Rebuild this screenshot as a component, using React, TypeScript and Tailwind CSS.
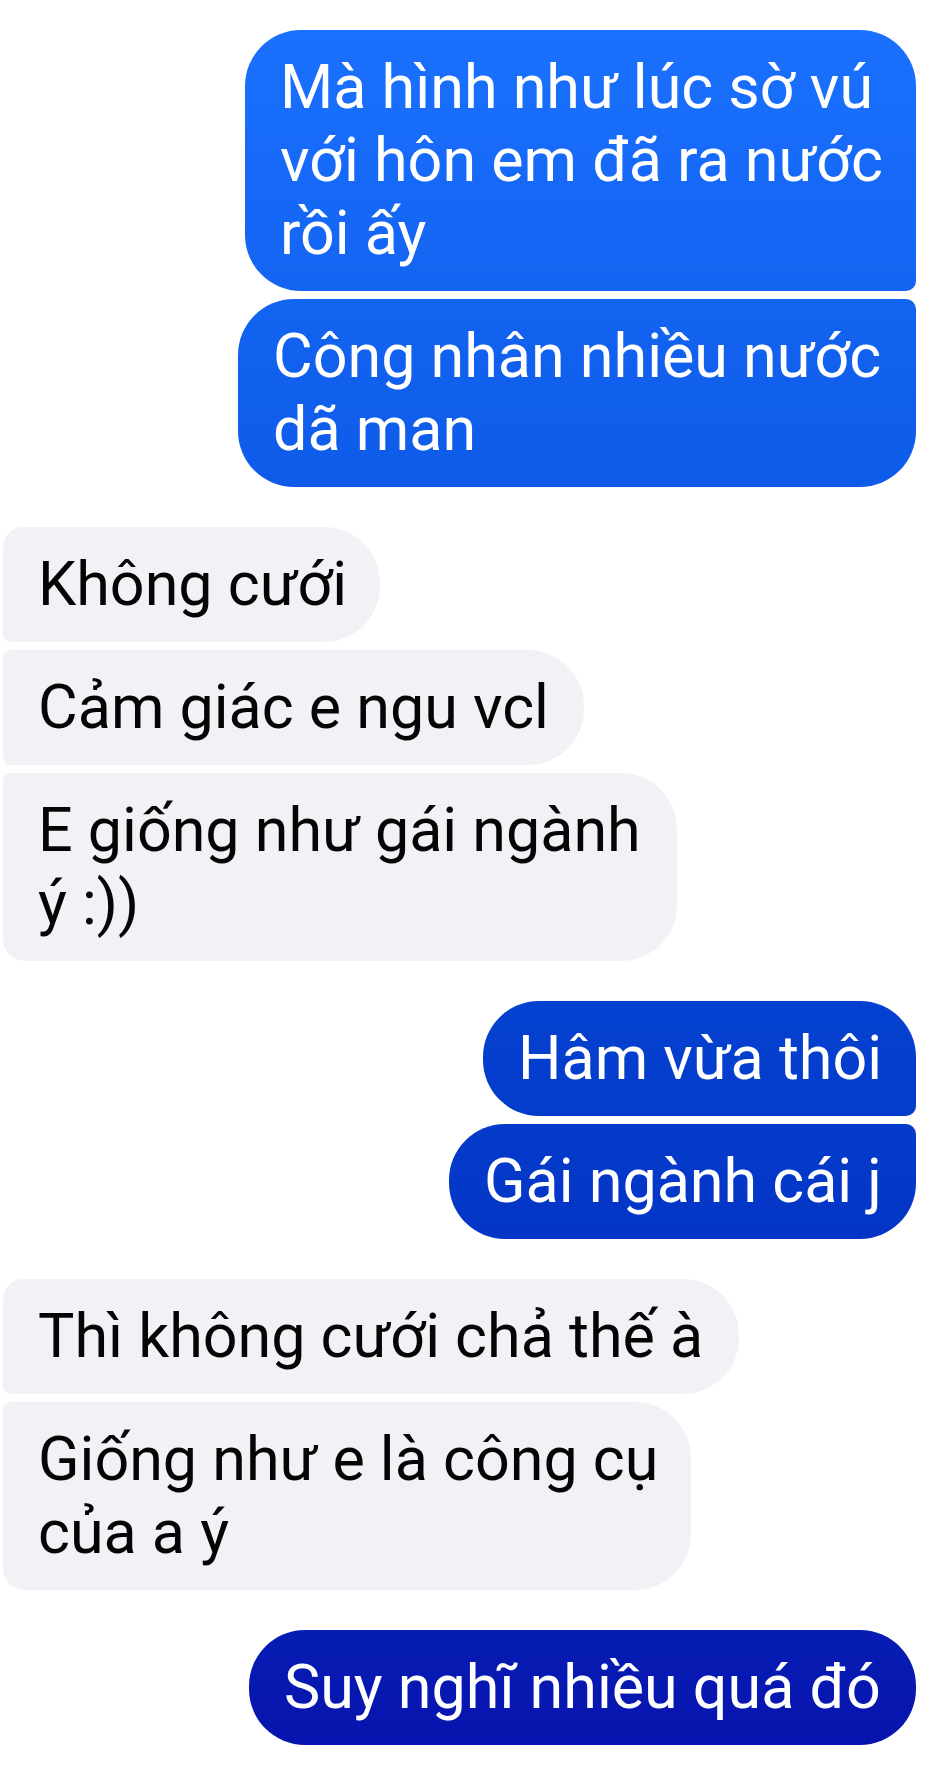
type Side = 'me' | 'them';

interface BubbleProps {
  lines: string[];
  side: Side;
  width: string;
  shape: string;
}

function Bubble({ lines, side, width, shape }: BubbleProps) {
  const tone =
    side === 'me'
      ? 'bg-fixed bg-linear-to-b from-[#1b72ff] to-[#0811ad] text-white'
      : 'bg-[#f1f2f6] text-[#050505]';
  return (
    <div className={`${tone} ${width} ${shape} px-[35px] py-[21px] whitespace-nowrap`}>
      {lines.map((l, i) => (
        <div key={i}>{l}</div>
      ))}
    </div>
  );
}

export default function App() {
  return (
    <div className="min-h-screen bg-white font-['Roboto',sans-serif] text-[61px] leading-[73px] pt-[30px] pb-[23px] flex flex-col gap-10">
      <div className="flex flex-col items-end gap-2 pr-5">
        <Bubble
          side="me"
          width="w-[671px]"
          shape="rounded-[56px] rounded-br-[10px]"
          lines={['Mà hình như lúc sờ vú', 'với hôn em đã ra nước', 'rồi ấy']}
        />
        <Bubble
          side="me"
          width="w-[678px]"
          shape="rounded-[56px] rounded-tr-[10px]"
          lines={['Công nhân nhiều nước', 'dã man']}
        />
      </div>

      <div className="flex flex-col items-start gap-2 pl-[3px]">
        <Bubble
          side="them"
          width="w-[377px]"
          shape="rounded-r-[56px] rounded-tl-[20px] rounded-bl-[8px]"
          lines={['Không cưới']}
        />
        <Bubble
          side="them"
          width="w-[581px]"
          shape="rounded-r-[56px] rounded-l-[8px]"
          lines={['Cảm giác e ngu vcl']}
        />
        <Bubble
          side="them"
          width="w-[674px]"
          shape="rounded-r-[56px] rounded-tl-[8px] rounded-bl-[22px]"
          lines={['E giống như gái ngành', 'ý :))']}
        />
      </div>

      <div className="flex flex-col items-end gap-2 pr-5">
        <Bubble
          side="me"
          width="w-[433px]"
          shape="rounded-l-[56px] rounded-tr-[56px] rounded-br-[10px]"
          lines={['Hâm vừa thôi']}
        />
        <Bubble
          side="me"
          width="w-[467px]"
          shape="rounded-l-[56px] rounded-br-[56px] rounded-tr-[10px]"
          lines={['Gái ngành cái j']}
        />
      </div>

      <div className="flex flex-col items-start gap-2 pl-[3px]">
        <Bubble
          side="them"
          width="w-[736px]"
          shape="rounded-r-[56px] rounded-tl-[20px] rounded-bl-[8px]"
          lines={['Thì không cưới chả thế à']}
        />
        <Bubble
          side="them"
          width="w-[688px]"
          shape="rounded-r-[56px] rounded-tl-[8px] rounded-bl-[22px]"
          lines={['Giống như e là công cụ', 'của a ý']}
        />
      </div>

      <div className="flex flex-col items-end pr-5">
        <Bubble
          side="me"
          width="w-[667px]"
          shape="rounded-[56px]"
          lines={['Suy nghĩ nhiều quá đó']}
        />
      </div>
    </div>
  );
}
